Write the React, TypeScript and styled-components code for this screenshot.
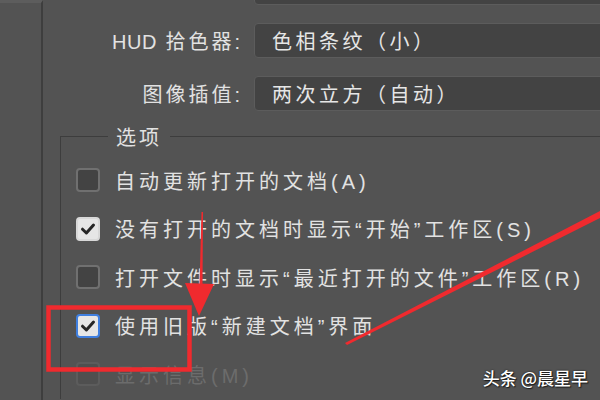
import React from 'react';
import styled, { createGlobalStyle } from 'styled-components';

const GlobalStyle = createGlobalStyle`
  html, body {
    margin: 0;
    padding: 0;
    background: #535353;
  }
  body {
    font-family: "Liberation Sans", "Noto Sans CJK SC", sans-serif;
  }
`;

const Page = styled.div`
  position: relative;
  display: flex;
  width: 600px;
  height: 400px;
  overflow: hidden;
  background: #535353;
  color: #e2e2e2;
  font-family: "Liberation Sans", "Noto Sans CJK SC", sans-serif;
`;

const LeftRail = styled.div`
  flex: 0 0 41px;
  border-top: 3px solid #5d5d5d;
  border-right: 2px solid #3e3e3e;
`;

const Main = styled.div`
  flex: 1;
  display: flex;
  flex-direction: column;
  gap: 18px;
  min-width: 0;
`;

const FormRow = styled.div<{ $stub?: boolean }>`
  display: grid;
  grid-template-columns: 200px 1fr;
  column-gap: 11px;
  align-items: center;
  margin-right: -12px;
  margin-top: ${({ $stub }) => ($stub ? '-30px' : '0')};
`;

const Label = styled.label`
  text-align: right;
  font-size: 20px;
  letter-spacing: 3px;
  color: #e2e2e2;
  white-space: nowrap;
`;

const Latin = styled.span`
  letter-spacing: 0.5px;
`;

const Select = styled.div`
  height: 33px;
  display: flex;
  align-items: center;
  padding-left: 17px;
  background: #434343;
  border: 1px solid #5c5c5c;
  border-radius: 4px;
  font-size: 20px;
  letter-spacing: 3.5px;
  color: #e6e6e6;
  font-family: "Noto Sans CJK SC", sans-serif;
  white-space: nowrap;
`;

const Group = styled.fieldset`
  margin: -7px -12px 0 17px;
  padding: 5px 0 0 15px;
  border: none;
  border-top: 1px solid #3d3d3d;
  border-left: 1px solid #3d3d3d;
  display: flex;
  flex-direction: column;
`;

const Legend = styled.legend`
  margin-left: 32px;
  padding: 0 8px;
  font-size: 20px;
  letter-spacing: 3px;
  color: #e2e2e2;
`;

const OptionRow = styled.div<{ $disabled?: boolean }>`
  display: flex;
  align-items: center;
  gap: 15px;
  height: 48.5px;
  font-size: 20px;
  letter-spacing: 4px;
  white-space: nowrap;
  color: ${({ $disabled }) => ($disabled ? '#6c6c6c' : '#e2e2e2')};
`;

const Box = styled.span<{ $checked?: boolean; $focus?: boolean; $disabled?: boolean }>`
  flex: 0 0 auto;
  box-sizing: border-box;
  width: 24px;
  height: 24px;
  border-radius: 4px;
  display: flex;
  align-items: center;
  justify-content: center;
  background: ${({ $checked, $disabled }) =>
    $checked ? '#e6e6e6' : $disabled ? '#4f4f4f' : '#434343'};
  border: 2px solid
    ${({ $checked, $focus, $disabled }) =>
      $focus ? '#3f7fe0' : $checked ? '#d8d8d8' : $disabled ? '#5c5c5c' : '#707070'};
`;

const Overlay = styled.svg`
  position: absolute;
  inset: 0;
  pointer-events: none;
`;

const Watermark = styled.div`
  position: absolute;
  right: 12px;
  bottom: 10px;
  font-family: "Noto Sans CJK SC", sans-serif;
  font-size: 17px;
  font-weight: 500;
  color: #ffffff;
  text-shadow: 0 0 2px rgba(0, 0, 0, 0.8), 1px 1px 1px rgba(0, 0, 0, 0.6);
`;

const Check = () => (
  <svg width="18" height="18" viewBox="0 0 18 18">
    <path d="M3.5 9.2 L7.4 13 L14.5 5" fill="none" stroke="#262626" strokeWidth="3" strokeLinecap="round" strokeLinejoin="round" />
  </svg>
);

const options = [
  { text: '自动更新打开的文档(A)', checked: false },
  { text: '没有打开的文档时显示“开始”工作区(S)', checked: true },
  { text: '打开文件时显示“最近打开的文件”工作区(R)', checked: false },
  { text: '使用旧版“新建文档”界面', checked: true, focus: true },
  { text: '显示信息(M)', checked: false, disabled: true },
];

export default function App() {
  return (
    <>
      <GlobalStyle />
      <Page>
        <LeftRail />
        <Main>
          <FormRow $stub>
            <span />
            <Select />
          </FormRow>
          <FormRow>
            <Label>
              <Latin>HUD</Latin> 拾色器:
            </Label>
            <Select>色相条纹（小）</Select>
          </FormRow>
          <FormRow>
            <Label>图像插值:</Label>
            <Select>两次立方（自动）</Select>
          </FormRow>
          <Group>
            <Legend>选项</Legend>
            {options.map((o) => (
              <OptionRow key={o.text} $disabled={o.disabled}>
                <Box $checked={o.checked} $focus={o.focus} $disabled={o.disabled}>
                  {o.checked && <Check />}
                </Box>
                <span>{o.text}</span>
              </OptionRow>
            ))}
          </Group>
        </Main>

        <Overlay width="600" height="400" viewBox="0 0 600 400">
          <g fill="#f02a2e" stroke="none">
            <rect x="48.5" y="307.5" width="141" height="62" fill="none" stroke="#f02a2e" strokeWidth="4.5" />
            <polygon points="201.5,212 203,212 202.5,286 199.5,286" />
            <polygon points="185,283 214,284 199,316" />
            <polygon points="345,343 600,211 600,218 347,345" />
          </g>
        </Overlay>
        <Watermark>头条 @晨星早</Watermark>
      </Page>
    </>
  );
}
